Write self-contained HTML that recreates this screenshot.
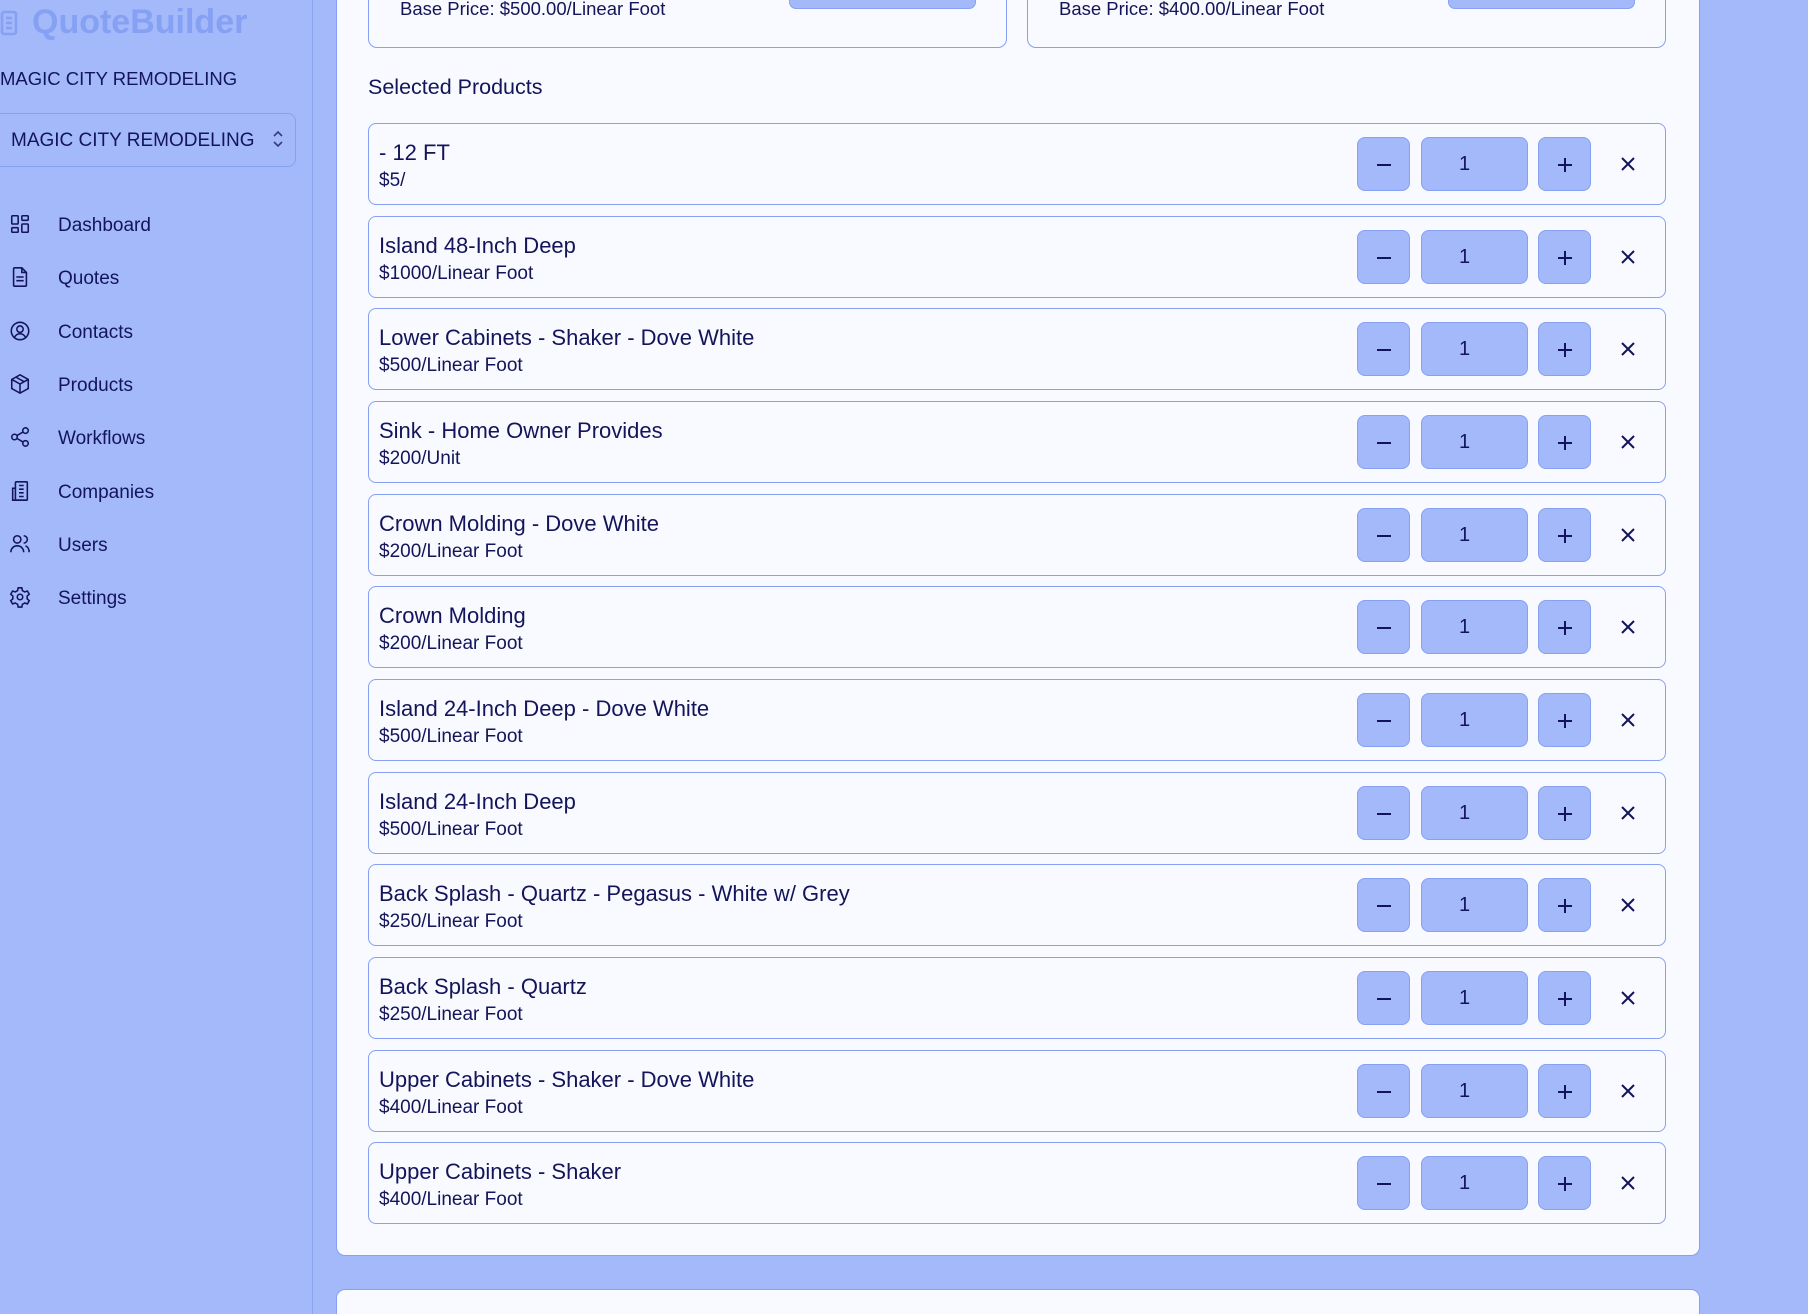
<!DOCTYPE html>
<html style="overflow:hidden;height:1314px"><head><meta charset="utf-8"><style>
*{box-sizing:border-box;margin:0;padding:0}
html,body{width:1808px;height:1314px;overflow:hidden}
body{background:#a4b9f9;font-family:"Liberation Sans",sans-serif;color:#14145a;position:relative}
.side{position:absolute;left:0;top:0;width:313px;height:1314px;background:#a4b9f9;border-right:1.5px solid #8aa4f2}
.logo{position:absolute;left:32px;top:3px;font-size:34px;font-weight:bold;color:#86a0f3}
.org{position:absolute;left:0;top:68px;font-size:18.5px}
.sel{position:absolute;left:-10px;top:113px;width:306px;height:54px;border:1.5px solid #86a0f3;border-radius:8px;font-size:19px;padding:16px 0 0 20px}
.nav{position:absolute;left:0;font-size:19px}
.nav svg{position:absolute;left:9px;top:-1px}
.nav span{position:absolute;left:58px;top:1px;white-space:nowrap}
.panel{position:absolute;left:336px;top:-20px;width:1364px;height:1276px;background:#f8faff;border:1.5px solid #86a0f3;border-radius:9px}
.panel2{position:absolute;left:336px;top:1289px;width:1364px;height:25px;background:#f8faff;border:1.5px solid #86a0f3;border-bottom:none;border-radius:9px 9px 0 0}
.card{position:absolute;top:-30px;height:78px;border:1.5px solid #86a0f3;border-radius:9px;background:#f8faff}
.card .t{position:absolute;left:31px;top:27px;font-size:18.5px}
.card .b{position:absolute;left:420px;top:22px;width:187px;height:16px;background:#a4b9f9;border:1.5px solid #86a0f3;border-radius:7px}
h2{position:absolute;left:368px;top:75px;font-size:21.5px;font-weight:normal}
.row{position:absolute;left:368px;width:1298px;height:82px;border:1.5px solid #86a0f3;border-radius:8px;background:#f8faff}
.row .n{position:absolute;left:10px;top:16px;font-size:22px;white-space:nowrap}
.row .p{position:absolute;left:10px;top:46px;font-size:19px}
.btn{position:absolute;top:13px;height:54px;background:#a4b9f9;border:1.5px solid #86a0f3;border-radius:8px;text-align:center;line-height:52px;font-size:20px}
.m{left:988px;width:53px}.q{left:1052px;width:107px;padding-right:20px}.pl{left:1169px;width:53px}
.x{position:absolute;left:1251px;top:32px}
</style></head><body>
<div class="side">
<svg style="position:absolute;left:-2px;top:10px" width="22" height="26" viewBox="0 0 22 26" fill="none" stroke="#86a0f3" stroke-width="2.5"><rect x="4" y="2" width="14" height="22" rx="2"/><path d="M8 8h6M8 13h6M8 18h6"/></svg>
<div class="logo">QuoteBuilder</div>
<div class="org">MAGIC CITY REMODELING</div>
<div class="sel">MAGIC CITY REMODELING
<svg style="position:absolute;right:10px;top:15px" width="14" height="20" viewBox="0 0 14 20" fill="none" stroke="#3a3a80" stroke-width="1.6"><path d="M3 7l4-4 4 4M3 13l4 4 4-4"/></svg></div>
<div class="nav" style="top:214px"><svg width="22" height="22" viewBox="0 0 24 24" fill="none" stroke="#14145a" stroke-width="1.7"><rect x="3" y="3" width="7" height="9" rx="1"/><rect x="14" y="3" width="7" height="5" rx="1"/><rect x="14" y="12" width="7" height="9" rx="1"/><rect x="3" y="16" width="7" height="5" rx="1"/></svg><span>Dashboard</span></div>
<div class="nav" style="top:267px"><svg width="22" height="22" viewBox="0 0 24 24" fill="none" stroke="#14145a" stroke-width="1.7"><path d="M6 2h8l5 5v14a1 1 0 0 1-1 1H6a1 1 0 0 1-1-1V3a1 1 0 0 1 1-1z"/><path d="M14 2v5h5M8 12h8M8 16h8"/></svg><span>Quotes</span></div>
<div class="nav" style="top:321px"><svg width="22" height="22" viewBox="0 0 24 24" fill="none" stroke="#14145a" stroke-width="1.7"><circle cx="12" cy="12" r="9.5"/><circle cx="12" cy="10" r="3.5"/><path d="M6 19c1.5-3 3.5-4 6-4s4.5 1 6 4"/></svg><span>Contacts</span></div>
<div class="nav" style="top:374px"><svg width="22" height="22" viewBox="0 0 24 24" fill="none" stroke="#14145a" stroke-width="1.7"><path d="M12 2l9 5v10l-9 5-9-5V7z"/><path d="M3 7l9 5 9-5M12 12v10M7.5 4.5l9 5"/></svg><span>Products</span></div>
<div class="nav" style="top:427px"><svg width="22" height="22" viewBox="0 0 24 24" fill="none" stroke="#14145a" stroke-width="1.7"><circle cx="18" cy="5" r="3"/><circle cx="6" cy="12" r="3"/><circle cx="18" cy="19" r="3"/><path d="M8.6 13.5l6.8 4M15.4 6.5l-6.8 4"/></svg><span>Workflows</span></div>
<div class="nav" style="top:481px"><svg width="22" height="22" viewBox="0 0 24 24" fill="none" stroke="#14145a" stroke-width="1.7"><rect x="7" y="2" width="13" height="20" rx="1"/><path d="M7 9H4v13h16M11 6h5M11 10h5M11 14h5M11 18h5"/></svg><span>Companies</span></div>
<div class="nav" style="top:534px"><svg width="22" height="22" viewBox="0 0 24 24" fill="none" stroke="#14145a" stroke-width="1.7"><circle cx="9" cy="7" r="4"/><path d="M2 21c0-4 3-7 7-7s7 3 7 7M16 3a4 4 0 0 1 0 8M18 14c2.5 1 4 3.5 4 7"/></svg><span>Users</span></div>
<div class="nav" style="top:587px"><svg width="22" height="22" viewBox="0 0 24 24" fill="none" stroke="#14145a" stroke-width="1.7"><circle cx="12" cy="12" r="3"/><path d="M10 2h4l.6 3 2.6 1.5 2.9-1 2 3.5-2.3 2v3l2.3 2-2 3.5-2.9-1-2.6 1.5-.6 3h-4l-.6-3-2.6-1.5-2.9 1-2-3.5 2.3-2v-3l-2.3-2 2-3.5 2.9 1L9.4 5z"/></svg><span>Settings</span></div>
</div>
<div class="panel"></div>
<div class="panel2"></div>
<div class="card" style="left:368px;width:639px"><div class="t">Base Price: $500.00/Linear Foot</div><div class="b"></div></div>
<div class="card" style="left:1027px;width:639px"><div class="t">Base Price: $400.00/Linear Foot</div><div class="b"></div></div>
<h2>Selected Products</h2>
<div id="rows"></div>
<script>
var d=[["- 12 FT","$5/"],["Island 48-Inch Deep","$1000/Linear Foot"],["Lower Cabinets - Shaker - Dove White","$500/Linear Foot"],["Sink - Home Owner Provides","$200/Unit"],["Crown Molding - Dove White","$200/Linear Foot"],["Crown Molding","$200/Linear Foot"],["Island 24-Inch Deep - Dove White","$500/Linear Foot"],["Island 24-Inch Deep","$500/Linear Foot"],["Back Splash - Quartz - Pegasus - White w/ Grey","$250/Linear Foot"],["Back Splash - Quartz","$250/Linear Foot"],["Upper Cabinets - Shaker - Dove White","$400/Linear Foot"],["Upper Cabinets - Shaker","$400/Linear Foot"]];
var h="";
d.forEach(function(r,i){var t=Math.round(123+i*92.67);
h+='<div class="row" style="top:'+t+'px"><div class="n">'+r[0]+'</div><div class="p">'+r[1]+'</div>'+
'<div class="btn m"><svg width="18" height="18" viewBox="0 0 18 18" style="vertical-align:middle"><path d="M2 9h14" stroke="#14145a" stroke-width="2"/></svg></div>'+
'<div class="btn q">1</div>'+
'<div class="btn pl"><svg width="18" height="18" viewBox="0 0 18 18" style="vertical-align:middle"><path d="M2 9h14M9 2v14" stroke="#14145a" stroke-width="2"/></svg></div>'+
'<svg class="x" width="16" height="16" viewBox="0 0 16 16"><path d="M2 2l12 12M14 2L2 14" stroke="#14145a" stroke-width="2"/></svg></div>';});
document.getElementById("rows").innerHTML=h;
</script>
</body></html>
